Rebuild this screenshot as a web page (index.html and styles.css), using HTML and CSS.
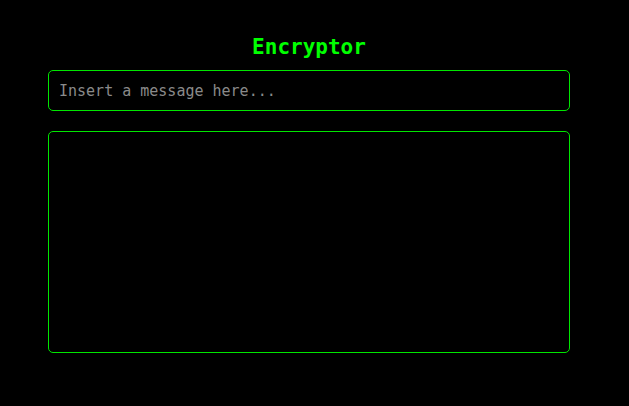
FILE: index.html
```html
<!DOCTYPE html>
<html lang="en">
<head>
<meta charset="utf-8">
<title>Encryptor</title>
<link rel="stylesheet" href="styles.css">
</head>
<body>
<main class="app">
  <h1 class="title">Encryptor</h1>
  <input class="message" type="text" placeholder="Insert a message here...">
  <textarea class="output" readonly></textarea>
</main>
</body>
</html>
```

FILE: styles.css
```css
html, body {
  margin: 0;
  padding: 0;
  background: #000;
}
body {
  font-family: "DejaVu Sans Mono", monospace;
}
.app {
  width: 522px;
  margin-left: 48px;
  padding-top: 35px;
  display: flex;
  flex-direction: column;
}
.title {
  margin: 0 0 11px;
  font-size: 21px;
  line-height: 24px;
  font-weight: bold;
  color: #00ff00;
  text-align: center;
}
.message {
  box-sizing: border-box;
  height: 41px;
  width: 100%;
  margin: 0 0 20px;
  padding: 0 10px;
  background: #000;
  border: 1px solid #00e600;
  border-radius: 5px;
  font-family: "DejaVu Sans Mono", monospace;
  font-size: 15px;
  color: #00ff00;
  outline: none;
}
.message::placeholder {
  color: #8a8a8a;
}
.output {
  box-sizing: border-box;
  height: 222px;
  width: 100%;
  margin: 0;
  padding: 10px;
  background: #000;
  border: 1px solid #00e600;
  border-radius: 5px;
  resize: none;
  font-family: "DejaVu Sans Mono", monospace;
  font-size: 15px;
  color: #00ff00;
  outline: none;
}
```
